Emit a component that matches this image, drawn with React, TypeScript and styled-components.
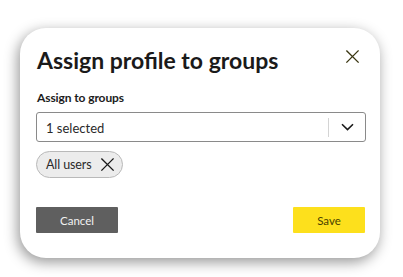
import React from 'react'
import styled, { createGlobalStyle } from 'styled-components'

const GlobalStyle = createGlobalStyle`
  html, body {
    margin: 0;
    padding: 0;
    background: #ffffff;
  }
  body {
    font-family: Lato, 'Liberation Sans', sans-serif;
    color: #1c1c1c;
  }
`

const CloseIcon: React.FC<{ size: number; stroke: number }> = ({ size, stroke }) => (
  <svg width={size} height={size} viewBox="0 0 16 16" fill="none">
    <path d="M2 2L14 14M14 2L2 14" stroke="currentColor" strokeWidth={stroke} strokeLinecap="square" />
  </svg>
)

const ChevronDown = () => (
  <svg width="13" height="8" viewBox="0 0 13 8" fill="none">
    <path d="M1 1.2L6.5 6.6L12 1.2" stroke="currentColor" strokeWidth="1.6" />
  </svg>
)

const App: React.FC = () => {
  return (
    <>
      <GlobalStyle />
      <Page>
        <Dialog>
          <Header>
            <Title>Assign profile to groups</Title>
            <CloseButton title="Close">
              <CloseIcon size={15} stroke={1.5} />
            </CloseButton>
          </Header>

          <Label>Assign to groups</Label>
          <Select>
            <SelectValue>1 selected</SelectValue>
            <Separator />
            <Caret>
              <ChevronDown />
            </Caret>
          </Select>

          <Chips>
            <Chip>
              All users
              <ChipRemove>
                <CloseIcon size={15} stroke={1.5} />
              </ChipRemove>
            </Chip>
          </Chips>

          <Actions>
            <Button variant="secondary">Cancel</Button>
            <Button variant="primary">Save</Button>
          </Actions>
        </Dialog>
      </Page>
    </>
  )
}

const Page = styled.div`
  padding: 28px 23px 19px 20px;
`

const Dialog = styled.div`
  display: flex;
  flex-direction: column;
  width: 360px;
  height: 230px;
  box-sizing: border-box;
  padding: 16px 14px 0 16px;
  background: #ffffff;
  border-radius: 26px;
  box-shadow: -2px 4px 14px rgba(0, 0, 0, 0.42);
`

const Header = styled.div`
  display: flex;
  align-items: flex-start;
  justify-content: space-between;
  height: 36px;
`

const Title = styled.h1`
  margin: 0;
  padding: 1px 0 0 1px;
  font-size: 23px;
  font-weight: 700;
  line-height: 30px;
  color: #1a1a1a;
`

const CloseButton = styled.button`
  margin: 5px 6px 0 0;
  padding: 0;
  border: 0;
  background: none;
  color: #3b3713;
  display: flex;
  cursor: pointer;
`

const Label = styled.div`
  margin: 11px 0 0 1px;
  font-size: 12px;
  font-weight: 700;
  line-height: 14px;
  letter-spacing: -0.1px;
  color: #1c1c1c;
`

const Select = styled.div`
  display: flex;
  align-items: center;
  margin-top: 7px;
  height: 30px;
  width: 330px;
  box-sizing: border-box;
  border: 1px solid #8a8a8a;
  border-radius: 3px;
`

const SelectValue = styled.span`
  flex: 1;
  padding: 1px 0 0 9px;
  font-size: 13px;
  color: #2a2a2a;
`

const Separator = styled.span`
  width: 1px;
  height: 19px;
  background: #d4d4d4;
`

const Caret = styled.span`
  display: flex;
  justify-content: center;
  width: 36px;
  color: #1a1a1a;
`

const Chips = styled.div`
  display: flex;
  margin-top: 9px;
`

const Chip = styled.div`
  display: flex;
  align-items: center;
  gap: 8px;
  height: 27px;
  box-sizing: border-box;
  padding: 0 7px 0 9px;
  background: #ececec;
  border: 1px solid #b9b9b9;
  border-radius: 14px;
  font-size: 12.5px;
  letter-spacing: -0.1px;
  color: #2a2a2a;
`

const ChipRemove = styled.span`
  display: flex;
  color: #1a1a1a;
`

const Actions = styled.div`
  display: flex;
  justify-content: space-between;
  width: 329px;
  margin-top: 29px;
`

const Button = styled.button<{ variant: 'primary' | 'secondary' }>`
  height: 26px;
  width: ${(p) => (p.variant === 'primary' ? '72px' : '82px')};
  border: 0;
  border-radius: 1px;
  font-family: Lato, 'Liberation Sans', sans-serif;
  font-size: 11.5px;
  background: ${(p) => (p.variant === 'primary' ? '#fde01c' : '#5f5f5f')};
  color: ${(p) => (p.variant === 'primary' ? '#4a4300' : '#f2f2f2')};
  cursor: pointer;
`

export default App
